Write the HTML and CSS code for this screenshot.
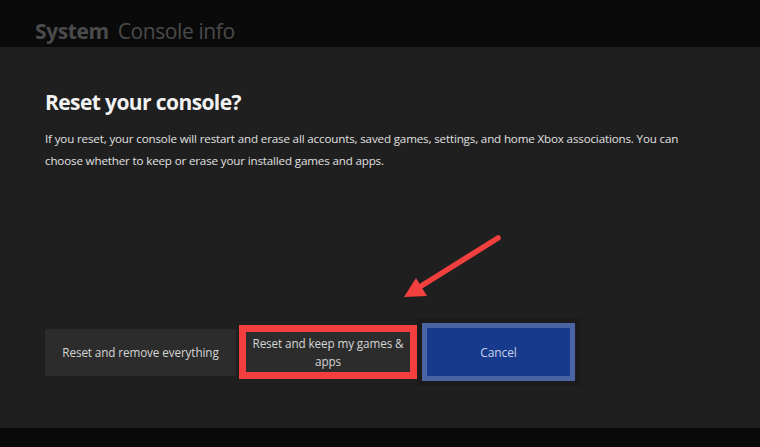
FILE: index.html
```html
<!DOCTYPE html>
<html lang="en">
<head>
    <meta charset="UTF-8">
    <meta name="viewport" content="width=device-width, initial-scale=1.0">
    <title>Reset your console?</title>
    <link rel="stylesheet" href="styles.css">
</head>
<body>
    <header class="topbar">
        <span class="crumb-main">System</span>
        <span class="crumb-sub">Console info</span>
    </header>

    <main class="dialog">
        <h1>Reset your console?</h1>
        <p class="desc">If you reset, your console will restart and erase all accounts, saved games, settings, and home Xbox associations. You can choose whether to keep or erase your installed games and apps.</p>

        <div class="actions">
            <button class="btn">Reset and remove everything</button>
            <div class="highlight">
                <button class="btn btn-keep">Reset and keep my games &amp; apps</button>
            </div>
            <div class="focus-ring">
                <button class="btn btn-cancel">Cancel</button>
            </div>
        </div>

        <!-- flecha de anotação -->
        <svg class="arrow" width="120" height="80" viewBox="0 0 120 80">
            <line x1="108" y1="8" x2="28" y2="58" stroke="#f2403f" stroke-width="5.5" stroke-linecap="round"/>
            <polygon points="14,67 26,48 37,66" fill="#f2403f"/>
        </svg>
    </main>

    <footer class="bottombar"></footer>
</body>
</html>
```

FILE: styles.css
```css
/* Reset básico */
* {
    margin: 0;
    padding: 0;
    box-sizing: border-box;
}

body {
    font-family: 'Open Sans', 'Noto Sans', sans-serif;
    background-color: #0a0a0a;
    color: #e6e6e6;
    width: 760px;
    height: 447px;
    overflow: hidden;
    display: flex;
    flex-direction: column;
}

/* Barra superior */
.topbar {
    height: 47px;
    background-color: #0a0a0a;
    display: flex;
    align-items: center;
    gap: 9px;
    padding: 14px 0 0 35px;
    font-size: 21px;
    color: #4b4b4b;
    letter-spacing: -0.4px;
}

.crumb-main {
    font-weight: 700;
}

/* Painel do diálogo */
.dialog {
    position: relative;
    height: 381px;
    background-color: #1f1f1f;
    padding: 40px 0 0 45px;
}

h1 {
    font-size: 21px;
    font-weight: 700;
    color: #f2f2f2;
    letter-spacing: -0.6px;
    line-height: 30px;
}

.desc {
    margin-top: 11px;
    font-size: 11.6px;
    line-height: 22px;
    color: #e0e0e0;
    max-width: 660px;
    letter-spacing: -0.15px;
}

/* Botões */
.actions {
    display: flex;
    align-items: center;
    margin-top: 151px;
}

.btn {
    font-family: inherit;
    font-size: 11.7px;
    color: #d4d4d4;
    background-color: #2c2c2c;
    border: none;
    width: 191px;
    height: 47px;
    letter-spacing: -0.1px;
}

.highlight {
    margin-left: 3px;
    border: 7px solid #f2403f;
    width: 178px;
    height: 54px;
    display: flex;
}

.btn-keep {
    width: 100%;
    height: 100%;
    line-height: 18px;
    padding: 0 2px;
}

.focus-ring {
    margin-left: 5px;
    border: 5px solid #4a64a6;
    width: 153px;
    height: 58px;
    box-shadow: 0 0 0 5px #1b1b1b;
    display: flex;
}

.btn-cancel {
    width: 100%;
    height: 100%;
    background-color: #173a8c;
    color: #c9d3ea;
    font-size: 12px;
}

/* Flecha vermelha */
.arrow {
    position: absolute;
    left: 390px;
    top: 183px;
}

.bottombar {
    flex: 1;
    background-color: #0a0a0a;
}
```
